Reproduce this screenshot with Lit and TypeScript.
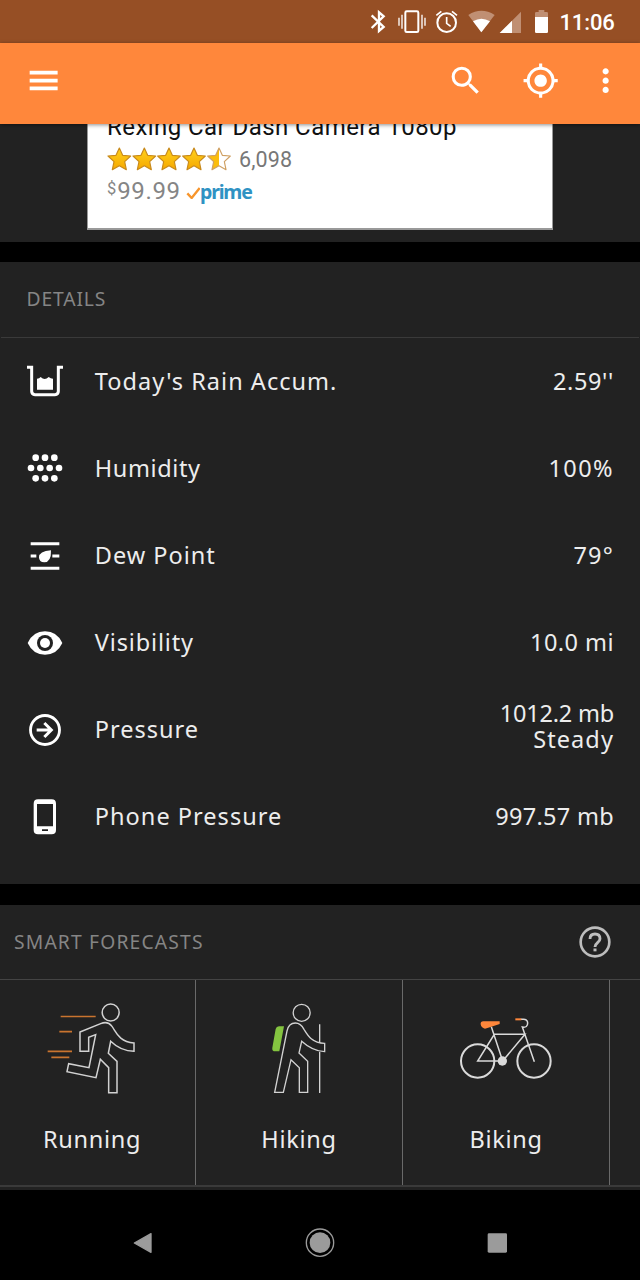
import { LitElement, html, svg, css } from "lit";
import { customElement } from "lit/decorators.js";

// Icon geometry is drawn on a grid three times finer than the screen.
const icon = (x: number, y: number, w: number, h: number, body: unknown) =>
  html`<svg class="icon" width=${w / 3} height=${h / 3} viewBox="${x} ${y} ${w} ${h}">${body}</svg>`;

const material = (d: string) =>
  html`<svg class="icon tool" viewBox="0 0 24 24"><path fill="#fff" d=${d} /></svg>`;

@customElement("status-bar")
class StatusBar extends LitElement {
  static styles = css`
    :host { display: flex; height: 43px; background: #964f25; padding-left: 368.3px; }
    .icon { display: block; flex: none; }
    .time { font: 500 22px/45px Roboto, sans-serif; color: #fff; margin-left: 4.5px; letter-spacing: -0.1px; white-space: nowrap; }
  `;
  render() {
    return html`
      ${icon(55, 0, 70, 129, svg`<path fill="none" stroke="#fff" stroke-width="7" d="M66 46L102 81 88 93V37L102 49 66 84"/>`)}
      ${icon(125, 0, 115, 129, svg`<rect x="165" y="34" width="39" height="62" rx="4" fill="none" stroke="#fff" stroke-width="6"/><path stroke="#fff" stroke-width="4" d="M155 44v42M146 53v24M215 44v42M224 53v24"/>`)}
      ${icon(240, 0, 100, 129, svg`<circle cx="290" cy="68" r="28" fill="none" stroke="#fff" stroke-width="6"/><path fill="none" stroke="#fff" stroke-width="5" d="M290 51v19l12 9M259 46l15-12M321 46l-15-12"/>`)}
      ${icon(340, 0, 100, 129, svg`<path fill="#c08f73" d="M395 97L356 45Q395 20 435 45z"/><path fill="#fff" d="M395 97L370 64Q395 48 421 64z"/>`)}
      ${icon(440, 0, 90, 129, svg`<path fill="#c08f73" d="M448 99L512 35V99z"/><path fill="#fff" d="M448 99L485 62V99z"/>`)}
      ${icon(530, 0, 85, 129, svg`<path fill="#c08f73" d="M554 52V40q0-4 4-4h7v-6h17v6h7q4 0 4 4v12z"/><path fill="#fff" d="M554 51h39v44q0 4-4 4h-31q-4 0-4-4z"/>`)}
      <span class="time">11:06</span>
    `;
  }
}

@customElement("tool-bar")
class ToolBar extends LitElement {
  static styles = css`
    :host { display: flex; align-items: center; height: 81px; background: #ff873b; padding: 0 15.7px 6px 25px; box-sizing: border-box; position: relative; box-shadow: 0 1px 4px rgba(0,0,0,.45); }
    .tool { width: 37.3px; height: 37.3px; flex: none; }
    .actions { display: flex; margin-left: auto; gap: 28px; }
    .first { display: flex; gap: 37.5px; }
  `;
  render() {
    return html`
      ${material("M3 18.1h18v-2.4H3zM3 13.2h18v-2.4H3zM3 8.1h18V5.700H3z")}
      <div class="actions">
        <div class="first">
          ${material("M15.5 14h-.79l-.28-.27A6.47 6.47 0 0 0 16 9.5 6.5 6.5 0 1 0 9.5 16c1.61 0 3.09-.59 4.23-1.57l.27.28v.79l5 4.99L20.49 19l-4.99-5zm-6 0C7.01 14 5 11.99 5 9.5S7.01 5 9.5 5 14 7.01 14 9.5 11.99 14 9.5 14z")}
          ${material("M12 8c-2.21 0-4 1.79-4 4s1.79 4 4 4 4-1.79 4-4-1.79-4-4-4zm8.94 3A8.994 8.994 0 0 0 13 3.06V1h-2v2.06A8.994 8.994 0 0 0 3.06 11H1v2h2.06A8.994 8.994 0 0 0 11 20.94V23h2v-2.06A8.994 8.994 0 0 0 20.94 13H23v-2h-2.06zM12 19c-3.87 0-7-3.13-7-7s3.13-7 7-7 7 3.13 7 7-3.13 7-7 7z")}
        </div>
        ${material("M12 8c1.1 0 2-.9 2-2s-.9-2-2-2-2 .9-2 2 .9 2 2 2zm0 2c-1.1 0-2 .9-2 2s.9 2 2 2 2-.9 2-2-.9-2-2-2zm0 6c-1.1 0-2 .9-2 2s.9 2 2 2 2-.9 2-2-.9-2-2-2z")}
      </div>
    `;
  }
}

const STAR = "M0-33L10-11 34-9 16 8 21 32 0 20-21 32-16 8-34-9-10-11z";

@customElement("product-ad")
class ProductAd extends LitElement {
  static styles = css`
    :host { display: block; height: 118px; padding: 0 87px; background: #222; overflow: hidden; }
    .card { height: 105.5px; width: 466px; box-sizing: border-box; background: #fff; border: 1px solid #999; border-top: 0; border-bottom-width: 2px; padding-left: 19px; overflow: hidden; font-family: Roboto, sans-serif; color: #777; }
    .title { margin-top: -12px; font-size: 24px; line-height: 30px; height: 36px; color: #111; white-space: nowrap; letter-spacing: 0.44px; }
    .rating { display: flex; height: 25px; align-items: center; }
    .rating .icon { margin-top: -3px; }
    .count { font-size: 21.5px; margin-left: 8px; line-height: 24px; letter-spacing: 0.15px; margin-top: -1px; }
    .price { display: flex; align-items: baseline; height: 36px; line-height: 36px; }
    .cur { font-size: 16.5px; line-height: 20px; align-self: flex-start; margin-top: 6px; margin-right: 1px; color: #858585; }
    .amount { font-size: 24px; color: #858585; letter-spacing: 0.6px; }
    .check { margin-left: 5px; }
    .prime { font: 700 19.5px/30px "Noto Sans", sans-serif; color: #2f92c3; letter-spacing: -1.2px; margin-left: 0.5px; }
  `;
  render() {
    const stars = [358, 433, 507, 582, 657];
    return html`
      <div class="card">
        <div class="title">Rexing Car Dash Camera 1080p</div>
        <div class="rating">
          ${icon(321, 322, 372, 72, svg`
            <defs>
              <linearGradient id="gold" x1="0" y1="0" x2="0" y2="1"><stop offset="0" stop-color="#ffd21c"/><stop offset="1" stop-color="#f6a800"/></linearGradient>
              <linearGradient id="half"><stop offset=".5" stop-color="#fbbd0c"/><stop offset=".5" stop-color="#fff"/></linearGradient>
            </defs>
            ${stars.map((x, i) => svg`<path d=${STAR} transform="translate(${x} 358)" fill=${i < 4 ? "url(#gold)" : "url(#half)"} stroke=${i < 4 ? "#c88a1c" : "#cfa063"} stroke-width="3.5" stroke-linejoin="round"/>`)}`)}
          <span class="count">6,098</span>
        </div>
        <div class="price">
          <span class="cur">$</span><span class="amount">99.99</span>
          <span class="check">${icon(557, 436, 42, 42, svg`<path fill="none" stroke="#f7952c" stroke-width="7" d="M561 461l13 14 24-30"/>`)}</span>
          <span class="prime">prime</span>
        </div>
      </div>
    `;
  }
}

// Each text carries its own tracking, in pixels.
const details = [
  { label: ["Today's Rain Accum.", 1.03], value: [["2.59''", 0.65]], y: 393, art: svg`<path fill="none" stroke="#fff" stroke-width="9" d="M81 352h14v72q0 10 10 10h60q10 0 10-10v-72h14"/><path fill="#fff" d="M111 419v-33q7 0 11-5 6 6 12 6t12-6q6 5 13 5v33z"/>` },
  { label: ["Humidity", 0.6], value: [["100%", 1.4]], y: 653, art: svg`${[[107, 622], [135, 622], [163, 622], [93, 653], [121, 653], [149, 653], [177, 653], [107, 684], [135, 684], [163, 684]].map(([x, y]) => svg`<circle cx=${x} cy=${y} r="10" fill="#fff"/>`)}` },
  { label: ["Dew Point", 1.0], value: [["79°", 1.2]], y: 915, art: svg`<path stroke="#fff" stroke-width="9" d="M92 878h86M92 952h86M92 915h17M157 915h21"/><path fill="#fff" d="M153 898q1 36-20 36-16 0-16-15 0-18 36-21z"/>` },
  { label: ["Visibility", 0.85], value: [["10.0 mi", 0.45]], y: 186, art: svg`<path fill="#fff" d="M83 186q16-35 52-35t52 35q-16 35-52 35t-52-35z"/><circle cx="135" cy="186" r="24" fill="#222"/><circle cx="135" cy="186" r="15" fill="#fff"/>` },
  { label: ["Pressure", 1.0], value: [["1012.2 mb", -0.2], ["Steady", 1.1]], y: 448, art: svg`<circle cx="135" cy="448" r="43.5" fill="none" stroke="#fff" stroke-width="8.5"/><path fill="none" stroke="#fff" stroke-width="9" d="M110 448h42M133 427l21 21-21 21"/>` },
  { label: ["Phone Pressure", 1.03], value: [["997.57 mb", 0.3]], y: 710, art: svg`<path fill="#fff" fill-rule="evenodd" d="M114 657h41q13 0 13 13v79q0 13-13 13h-41q-13 0-13-13v-79q0-13 13-13zM111 671v67h48v-67zM126 747v5h18v-5z"/>` },
];

@customElement("details-panel")
class DetailsPanel extends LitElement {
  static styles = css`
    :host { display: block; height: 622px; background: #222; margin-top: 20px; font-family: "Noto Sans", sans-serif; }
    .head { height: 75.8px; box-sizing: border-box; border-bottom: 1.5px solid #3a3a3a; margin: 0 1px; padding-left: 25.5px; line-height: 73px; font-size: 19.3px; color: #858585; letter-spacing: 0.85px; }
    .row { display: flex; align-items: center; height: 87.1px; padding: 0 27px 0 25px; font-size: 23.5px; color: #ededed; }
    .icon { display: block; flex: none; }
    .label { margin-left: 29.8px; flex: 1; padding-bottom: 1.4px; }
    .value { text-align: right; line-height: 26px; padding-bottom: 1.4px; margin-right: -1px; }
    .value.two { padding-bottom: 7px; }
  `;
  render() {
    return html`
      <div class="head">DETAILS</div>
      ${details.map((d) => html`
        <div class="row">
          ${icon(75, d.y - 60, 120, 120, d.art)}
          <span class="label" style="letter-spacing:${d.label[1]}px">${d.label[0]}</span>
          <div class="value ${d.value.length > 1 ? "two" : ""}">${d.value.map(([text, tracking]) => html`<div style="letter-spacing:${tracking}px">${text}</div>`)}</div>
        </div>`)}
    `;
  }
}

const sports = [
  { name: "Running", art: icon(127, 80, 300, 300, svg`
    <path stroke="#c9742f" stroke-width="5" d="M183 138.500h105M179 184h38M144 243h73M155 261h54"/>
    <g fill="none" stroke="#d2d2d2" stroke-width="4.5"><circle cx="333" cy="126.500" r="25.500"/>
    <path d="M241 185L303 160Q324 151 337 168C350 186 358 214 403 218V243Q364 243 333 213L326 249 352 273V367H327V292L302 267 289 322 202 304 207 280 268 292 288 193 267 201V243H241z"/></g>`) },
  { name: "Hiking", art: icon(147, 80, 300, 300, svg`
    <path fill="#84c440" d="M227 176q2-8 10-8h15l-14 75h-12q-11 0-9-11z"/>
    <g fill="none" stroke="#d2d2d2" stroke-width="4"><circle cx="305" cy="127.500" r="25.500"/><path d="M359 162v56M359 244v124"/>
    <path d="M224 366L261 182Q266 158 286 158 302 158 312 177C324 197 337 218 374 219V244Q338 243 305 213L297 248 323 273V366H298V292L273 268 250 366z"/></g>`) },
  { name: "Biking", art: icon(168, 291, 300, 300, svg`
    <g fill="none" stroke="#dadada" stroke-width="4.500"><path d="M308 483H233L283 403H375L308 483 274 380M403 485L367 381Q383 384 383 369 383 357 368 358H362"/>
    <circle cx="233" cy="483" r="50" stroke-width="6"/><circle cx="402" cy="483" r="50" stroke-width="6"/></g>
    <circle cx="307" cy="483" r="14" fill="#dadada"/><path stroke="#ff873b" stroke-width="6" d="M346 358h18"/>
    <path fill="#ff873b" d="M242 373q-1-9 8-9h49v8l-25 8-19 6q-12-3-13-13z"/>`) },
];

@customElement("smart-forecasts")
class SmartForecasts extends LitElement {
  static styles = css`
    :host { display: block; height: 285px; background: #222; margin-top: 21px; overflow: hidden; font-family: "Noto Sans", sans-serif; }
    .head { display: flex; align-items: center; justify-content: space-between; height: 75px; box-sizing: border-box; border-bottom: 1.500px solid #444; padding: 0 29px 0 14px; font-size: 19.3px; color: #858585; }
    .title { letter-spacing: 1.16px; padding-bottom: 2px; }
    .icon { display: block; }
    .list { display: flex; height: 205px; width: 830px; margin-left: -11px; }
    .rule { height: 2px; background: #3a3a3a; }
    .tile { width: 207px; flex: none; box-sizing: border-box; border-right: 1px solid #6a6a6a; display: flex; flex-direction: column; align-items: center; padding-top: 17px; font-size: 23.5px; letter-spacing: 0.7px; line-height: 32px; color: #ededed; }
    .name { margin-top: 26px; }
  `;
  render() {
    return html`
      <div class="head"><span class="title">SMART FORECASTS</span>
        ${icon(537, 77, 96, 96, svg`<circle cx="585" cy="125" r="43" fill="none" stroke="#bdbdbd" stroke-width="8"/><path fill="none" stroke="#bdbdbd" stroke-width="8.500" d="M570 116Q570 101 585 101T600 115C600 127 585 127 585 140"/><path fill="#bdbdbd" d="M580.500 144.500h9v8.500h-9z"/>`)}
      </div>
      <div class="list">
        ${sports.map((s) => html`<div class="tile">${s.art}<span class="name">${s.name}</span></div>`)}
      </div>
      <div class="rule"></div>
    `;
  }
}

@customElement("nav-bar")
class NavBar extends LitElement {
  static styles = css`
    :host { display: flex; justify-content: space-between; align-items: center; flex: 1; padding: 15px 129px 0 128.500px; }
    .icon { display: block; }
  `;
  render() {
    return html`
      ${icon(87, 143, 84, 90, svg`<path fill="#9b9b9b" stroke="#9b9b9b" stroke-width="4" stroke-linejoin="round" d="M103 188l50-28v56z"/>`)}
      ${icon(614, 143, 90, 90, svg`<circle cx="659" cy="187" r="31" fill="#9b9b9b"/><circle cx="659" cy="187" r="41" fill="none" stroke="#9b9b9b" stroke-width="4"/>`)}
      ${icon(1148, 143, 84, 90, svg`<rect x="1162" y="159" width="58" height="58" rx="4" fill="#9b9b9b"/>`)}
    `;
  }
}

@customElement("app-root")
class AppRoot extends LitElement {
  static styles = css`
    :host { display: flex; flex-direction: column; width: 640px; height: 1280px; background: #000; overflow: hidden; }
  `;
  render() {
    return html`
      <status-bar></status-bar>
      <tool-bar></tool-bar>
      <product-ad></product-ad>
      <details-panel></details-panel>
      <smart-forecasts></smart-forecasts>
      <nav-bar></nav-bar>
    `;
  }
}
